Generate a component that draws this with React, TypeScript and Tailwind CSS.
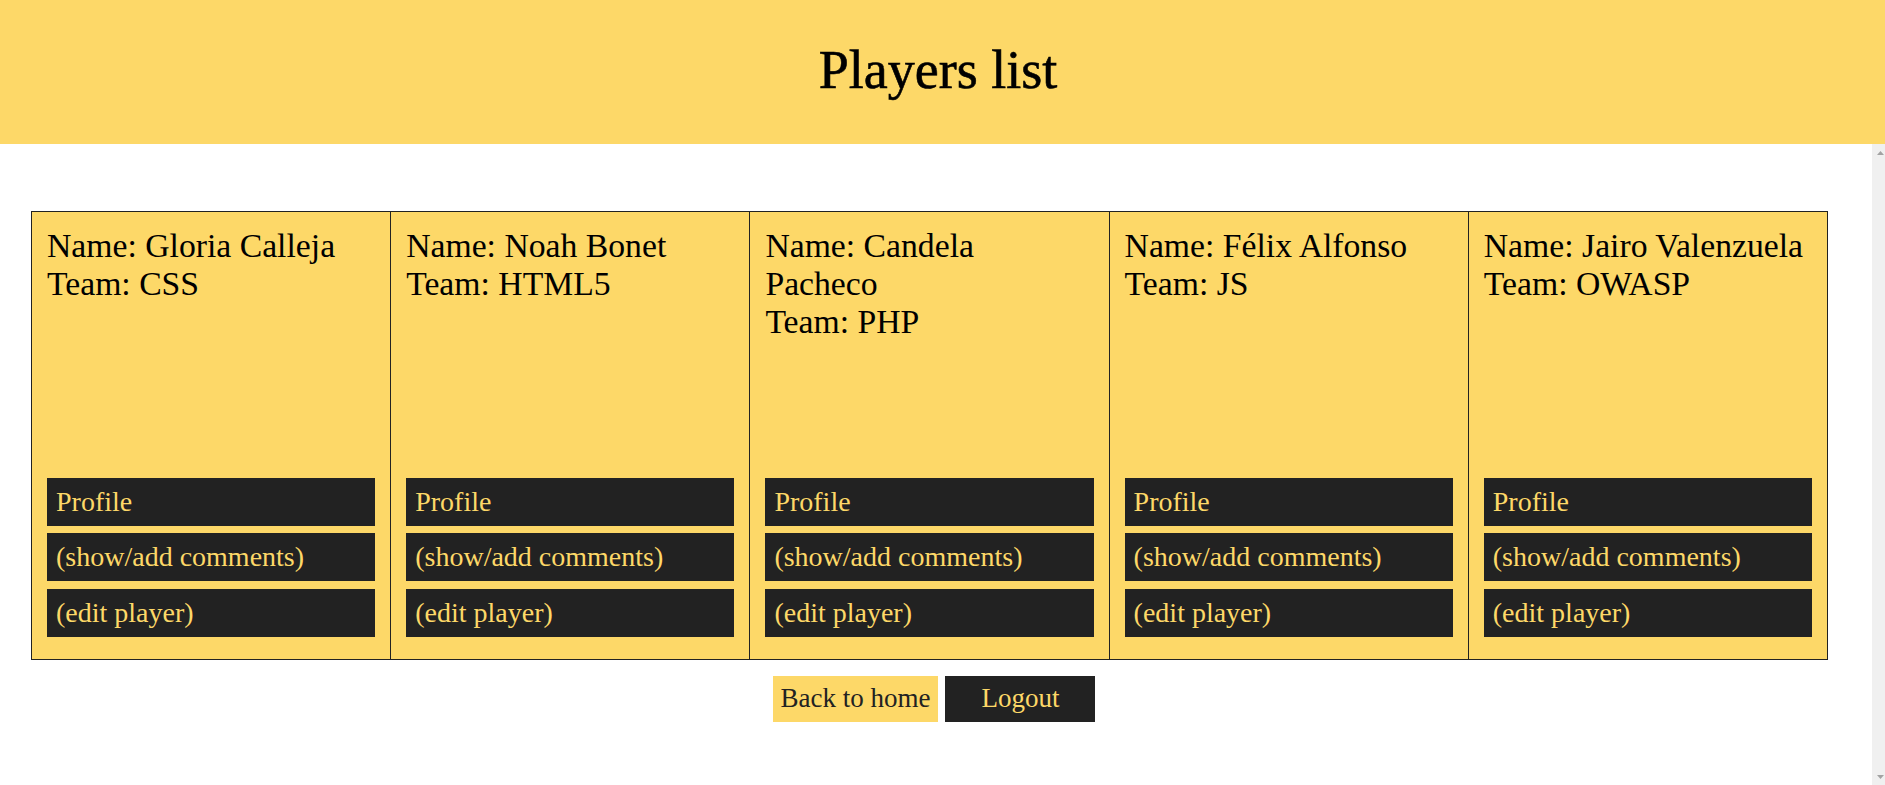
import React from "react";

const players = [
  { name: "Gloria Calleja", team: "CSS" },
  { name: "Noah Bonet", team: "HTML5" },
  { name: "Candela Pacheco", team: "PHP" },
  { name: "Félix Alfonso", team: "JS" },
  { name: "Jairo Valenzuela", team: "OWASP" },
];

const serif = { fontFamily: '"Liberation Serif", "Times New Roman", serif' };

function Arrow({ up }: { up: boolean }) {
  return (
    <svg width="7" height="4" viewBox="0 0 7 4" className="block">
      <polygon points={up ? "3.5,0 7,4 0,4" : "0,0 7,0 3.5,4"} fill="#a3a3a3" />
    </svg>
  );
}

export default function App() {
  return (
    <div className="h-screen flex flex-col bg-white text-black overflow-hidden" style={serif}>
      <header className="h-[144px] shrink-0 bg-[#fdd868]">
        <h1 className="pt-[39px] pr-[9px] text-center text-[54px] leading-[62px] font-normal text-black [-webkit-text-stroke:0.6px_black]">
          Players list
        </h1>
      </header>
      <div className="flex-1 flex min-h-0">
        <main className="flex-1 min-w-0">
          <div className="pt-[67px] pl-[31px]">
            <div className="w-[1797px] grid grid-cols-5 border-l border-t border-b border-[#222222]">
              {players.map((p) => (
                <div
                  key={p.name}
                  className="h-[447px] flex flex-col bg-[#fdd868] border-r border-[#222222] px-[15px] pt-[15px] pb-[22.5px]"
                >
                  <div className="flex-1 pr-[2px] text-[33.7px] leading-[38px] text-black">
                    <p>Name: {p.name}</p>
                    <p>Team: {p.team}</p>
                  </div>
                  <div className="flex flex-col gap-[7.5px]">
                    {["Profile", "(show/add comments)", "(edit player)"].map((l) => (
                      <a
                        key={l}
                        href="#"
                        className="block bg-[#222222] text-[#fdd868] text-[28px] leading-[32px] py-2 pl-[9px]"
                      >
                        {l}
                      </a>
                    ))}
                  </div>
                </div>
              ))}
            </div>
          </div>
          <div className="mt-4 pr-[4px] flex justify-center gap-[7px]">
            <a
              href="#"
              className="bg-[#fdd868] text-[#222222] text-[27px] leading-[32px] pt-[6px] pb-[8px] px-[8px]"
            >
              Back to home
            </a>
            <a
              href="#"
              className="w-[150px] text-center bg-[#222222] text-[#fdd868] text-[27px] leading-[32px] pt-[6px] pb-[8px]"
            >
              Logout
            </a>
          </div>
        </main>
        <aside className="w-[13px] shrink-0 bg-[#f0f0f0] flex flex-col justify-between items-end pr-[1px] pt-[7px] pb-[6px]">
          <Arrow up />
          <Arrow up={false} />
        </aside>
      </div>
    </div>
  );
}
